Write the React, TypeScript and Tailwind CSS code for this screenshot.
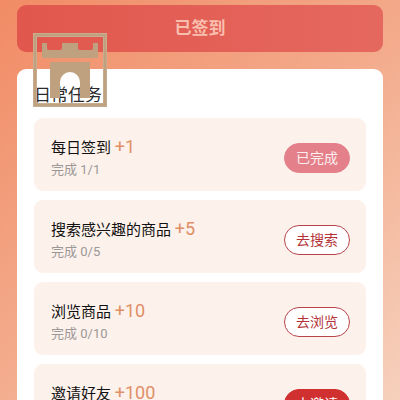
import React from 'react';

interface Task {
  title: string;
  reward: number;
  done: number;
  total: number;
  action: string;
  variant: 'done' | 'outline' | 'solid';
}

const tasks: Task[] = [
  { title: '每日签到', reward: 1, done: 1, total: 1, action: '已完成', variant: 'done' },
  { title: '搜索感兴趣的商品', reward: 5, done: 0, total: 5, action: '去搜索', variant: 'outline' },
  { title: '浏览商品', reward: 10, done: 0, total: 10, action: '去浏览', variant: 'outline' },
  { title: '邀请好友', reward: 100, done: 0, total: 10, action: '去邀请', variant: 'solid' },
];

const buttonStyles = {
  done: 'border-[#e4808a] bg-[#e4808a] text-[#fdeeee]',
  outline: 'border-[#b8444a] bg-white text-[#b53338]',
  solid: 'border-[#d03030] bg-[#d03030] text-white',
};

const GateLogo: React.FC = () => (
  <svg
    className="absolute left-4 -top-9 size-[74px]"
    viewBox="0 0 74 74"
    fill="#bfa180"
    aria-hidden="true"
  >
    <rect x="2" y="2" width="70" height="70" fill="none" stroke="#bfa180" strokeWidth="4" />
    <g fill="none" stroke="#cdb59a" strokeWidth="0.6">
      <rect x="0.5" y="0.5" width="73" height="73" />
      <rect x="3.7" y="3.7" width="66.6" height="66.6" />
    </g>
    <path d="M9 10h5v5q0 2 2 2h11q2 0 2-2v-5h16v5q0 2 2 2h11q2 0 2-2v-5h5v15H9z" />
    <path d="M17 29h40v36H47V49a10 10 0 0 0-20 0v16H17z" />
  </svg>
);

const TaskCard: React.FC<{ task: Task }> = ({ task }) => (
  <li className="flex items-center justify-between rounded-[9px] bg-[#fdf1ec] h-[73px] pl-[17px] pr-4">
    <div className="pt-1.5">
      <h3 className="text-[15px] leading-6 text-[#111111]">
        {task.title} <span className="text-lg leading-6 text-[#e08f66]">+{task.reward}</span>
      </h3>
      <p className="text-[13px] leading-5 text-[#9b9896]">
        完成 {task.done}/{task.total}
      </p>
    </div>
    <button
      type="button"
      className={`mt-1.5 h-[30px] w-[66px] rounded-full border text-sm leading-none ${buttonStyles[task.variant]}`}
    >
      {task.action}
    </button>
  </li>
);

const App: React.FC = () => {
  return (
    <main className="h-screen overflow-hidden bg-[linear-gradient(140deg,#f18b65_0%,#f3ab8c_50%,#f6d0bc_100%)] px-[17px] pt-[5px] font-[Roboto,'Noto_Sans_CJK_SC',sans-serif]">
      <button
        type="button"
        className="block h-[47px] w-full rounded-[9px] bg-linear-to-r from-[#e1574d] to-[#e5685f] text-[17px] font-bold text-[#f9bfae]"
      >
        已签到
      </button>

      <section className="relative mt-[17px] rounded-t-[9px] bg-white px-[17px] pt-[14px] pb-4">
        <h2 className="text-[17px] leading-6 text-[#2b2b2b]">日常任务</h2>
        <GateLogo />
        <ul className="mt-[11px] flex flex-col gap-[9px]">
          {tasks.map((task) => (
            <TaskCard key={task.title} task={task} />
          ))}
        </ul>
      </section>
    </main>
  );
};

export default App;
